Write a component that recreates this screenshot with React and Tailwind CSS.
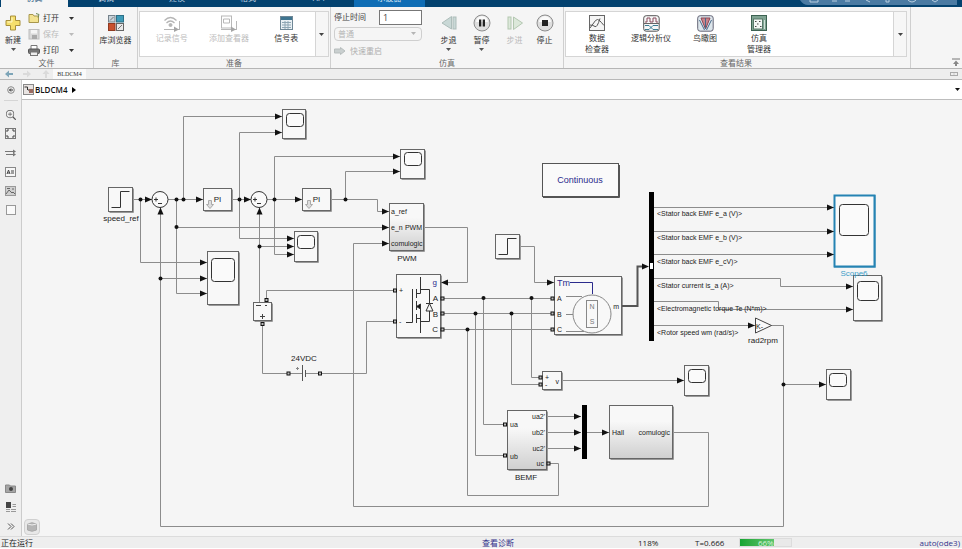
import { BsZoomIn } from "react-icons/bs";

/* ---------- ribbon ---------- */

const Caret = ({ className = "" }) => (
  <svg className={className} width="5" height="3" viewBox="0 0 5 3">
    <path d="M0 0h5L2.5 3z" fill="currentColor" />
  </svg>
);

const Section = ({ label, className, children }) => (
  <section
    className={`flex flex-col border-r border-[#cfcfcf] text-[#444] ${className}`}
  >
    <div className="flex h-[50px]">{children}</div>
    <h2 className="pt-px text-center text-[8px] leading-[10px] text-[#666]">
      {label}
    </h2>
  </section>
);

const BigButton = ({ icon, label, caret, disabled, className = "" }) => (
  <button
    type="button"
    disabled={disabled}
    className={`flex flex-col items-center pt-[7px] text-[8px] leading-[11px] text-[#333] disabled:text-[#b9b9b9] ${className}`}
  >
    <span className="flex h-[18px] items-center">{icon}</span>
    <span className="mt-[2px] h-3 whitespace-nowrap">{label}</span>
    {caret && <Caret className="mt-[2px] text-[#555]" />}
  </button>
);

const GalleryButton = ({ icon, label, disabled, className = "" }) => (
  <button
    type="button"
    disabled={disabled}
    className={`flex flex-col items-center pt-[2px] text-[8px] leading-[11px] whitespace-pre text-[#333] disabled:text-[#bcbcbc] ${className}`}
  >
    <span className="flex h-[18px] items-center">{icon}</span>
    {label}
  </button>
);

const FileButton = ({ icon, label, disabled }) => (
  <button
    type="button"
    disabled={disabled}
    className="flex h-4 items-center text-[8px] leading-4 text-[#333] disabled:text-[#bbb]"
  >
    <span className="flex w-[15px]">{icon}</span>
    {label}
    <Caret className="ml-[10px]" />
  </button>
);

const GalleryMore = () => (
  <button
    type="button"
    aria-label="更多"
    className="flex w-[13px] shrink-0 items-center justify-center border-l border-[#d5d5d5] bg-[#f6f6f6]"
  >
    <Caret />
  </button>
);

const PlusIcon = () => (
  <svg width="16" height="16" viewBox="0 0 16 16">
    <path
      d="M5.5 1h5v4.5H15v5h-4.500V15h-5v-4.500H1v-5h4.500z"
      fill="#f6df6b"
      stroke="#a8903c"
    />
    <path d="M7 2.5V7H2.500" fill="none" stroke="#fff8d0" />
  </svg>
);

const FolderIcon = () => (
  <svg width="12" height="11" viewBox="0 0 12 11">
    <path d="M1 1.5h4L6 3h4.500v6.500H1z" fill="#f3e391" stroke="#a8974d" />
    <path d="M8 0.5l3 1-1 3" fill="none" stroke="#6d8a55" />
  </svg>
);

const SaveIcon = () => (
  <svg width="12" height="11" viewBox="0 0 12 11">
    <rect x="1" y="0.5" width="10" height="9.5" fill="#d9d9d9" stroke="#bdbdbd" />
    <rect x="3" y="1" width="6" height="3.5" fill="#f5f5f5" />
    <rect x="4" y="6" width="5" height="4" fill="#aaa" />
  </svg>
);

const PrintIcon = () => (
  <svg width="12" height="11" viewBox="0 0 12 11">
    <path d="M3 4V0.5h6V4" fill="#fff" stroke="#777" />
    <rect x="0.5" y="4" width="11" height="4.5" rx="1" fill="#777" stroke="#555" />
    <rect x="2.5" y="7" width="7" height="3.5" fill="#eee" stroke="#777" />
  </svg>
);

const LibraryIcon = () => (
  <svg width="16" height="16" viewBox="0 0 16 16">
    <rect x="0.5" y="0.5" width="6.5" height="6.5" fill="#c8d3da" stroke="#75828b" />
    <rect x="8.5" y="0.5" width="7" height="6.5" fill="#3f9bb8" stroke="#2c7087" />
    <rect x="0.5" y="8.5" width="6.5" height="7" fill="#c9512e" stroke="#8f3b22" />
    <rect x="8.5" y="8.5" width="7" height="7" fill="#e9e9e9" stroke="#666" />
    <path d="M10 14l4-4M2 5.5L5.500 2" stroke="#777" />
  </svg>
);

const LogSignalIcon = () => (
  <svg width="18" height="17" viewBox="0 0 18 17" fill="none" stroke="#b5b5b5">
    <path d="M1.5 5.5q6-6 12 0M3.500 8q4-4 8 0" strokeWidth="1.3" />
    <circle cx="7.5" cy="10" r="1.5" fill="#b5b5b5" />
    <path d="M1 14.5h16M16.500 6v9" />
    <path d="M11 11.5l5 3-5 2.500z" fill="#a5a5a5" stroke="none" />
  </svg>
);

const AddViewerIcon = () => (
  <svg width="18" height="17" viewBox="0 0 18 17" fill="none" stroke="#b8b8b8">
    <rect x="1.5" y="1" width="10" height="12" />
    <path d="M3.5 4h6v4h-6zM1 14.500h16M16.500 6v9" />
    <path d="M11 11.5l5 3-5 2.500z" fill="#a5a5a5" stroke="none" />
  </svg>
);

const TableIcon = () => (
  <svg width="13" height="14" viewBox="0 0 13 14">
    <rect x="0.5" y="0.5" width="12" height="13" fill="#e9f0f4" stroke="#6f8796" />
    <rect x="1" y="1" width="11" height="3" fill="#3f7590" />
    <path d="M2 6.5h9M2 9h9M2 11.500h9M5 5v8M8 5v8" stroke="#8ea6b4" />
  </svg>
);

const StepIcon = ({ back }) => (
  <svg width="16" height="16" viewBox="0 0 16 16">
    {back ? (
      <g fill="#c9d8d6" stroke="#adbdba">
        <path d="M10.5 1.5V14L1 8z" />
        <rect x="12" y="2" width="3" height="12" />
      </g>
    ) : (
      <g fill="#dce8da" stroke="#b3c7b0">
        <path d="M6.5 2v12.500l9-6.500z" />
        <rect x="1" y="2" width="3" height="12" />
      </g>
    )}
  </svg>
);

const RoundIcon = ({ pause }) => (
  <svg width="18" height="18" viewBox="0 0 18 18">
    <circle cx="9" cy="9" r="8" fill="#dedede" stroke="#8d8d8d" />
    <path d="M3 8a6 6 0 0 1 12 0z" fill="#fafafa" />
    {pause ? (
      <path d="M6 5.5h2.300v7H6zM9.700 5.500H12v7H9.700z" fill="#222" />
    ) : (
      <rect x="6" y="6" width="6" height="6" fill="#222" />
    )}
  </svg>
);

const InspectorIcon = () => (
  <svg width="16" height="16" viewBox="0 0 16 16" fill="none">
    <rect x="0.5" y="0.5" width="15" height="15" fill="#f5f5f5" stroke="#666" />
    <path d="M1 13L6.500 5.500q2-2 4 0t4.500 5M1 10q3 0 5 1.500T11 3.500" stroke="#555" />
  </svg>
);

const LogicIcon = () => (
  <svg width="17" height="17" viewBox="0 0 17 17" fill="none">
    <rect x="0.7" y="0.7" width="15.5" height="15.5" rx="2.5" fill="#f7f7f7" stroke="#555" />
    <path d="M2 7h2V3h3v4h3V3h3v4h2" stroke="#884a5c" />
    <path d="M1 8.5h15" stroke="#666" />
    <path d="M2 10.5h4l4 4h5M2 14.500h4l4-4h5" stroke="#3b7d93" />
  </svg>
);

const BirdIcon = () => (
  <svg width="17" height="17" viewBox="0 0 17 17" fill="none">
    <rect x="0.7" y="0.7" width="15.5" height="15.5" rx="2.5" fill="#dce5eb" stroke="#667" />
    <path d="M4 3l4.500 11L13 3z" fill="#c9848c" stroke="#8d4450" />
    <path d="M8.500 14V3M2.500 5l5 10M14.500 5l-5 10" stroke="#46698a" />
  </svg>
);

const ManagerIcon = () => (
  <svg width="16" height="16" viewBox="0 0 16 16" fill="none">
    <rect x="0.5" y="0.5" width="15" height="15" fill="#7fa392" stroke="#3c6151" />
    <rect x="2.5" y="4" width="9" height="10" fill="#f4f8f6" stroke="#587969" />
    <path d="M4 6.5h1.500M8 6.500h1.500M6 9h1.500M4 11.500h1.500M9 11.500h1.500" stroke="#444" />
    <path d="M13.5 5v9" stroke="#cfe2d8" />
  </svg>
);

const TABS = [
  { name: "仿真", cls: "w-[67px] bg-[#f5f5f5] text-[#1a4f78]" },
  { name: "调试", cls: "w-[76px] text-[#c5d8e6]" },
  { name: "建模", cls: "w-[66px] text-[#c5d8e6]" },
  { name: "格式", cls: "w-[76px] text-[#c5d8e6]" },
  { name: "APP", cls: "w-[68px] text-[#c5d8e6]" },
  { name: "示波器", cls: "w-[71px] bg-[#0f6db5] text-[#d5e8f6]" },
];

const TabStrip = () => (
  <nav className="flex h-[7px] overflow-hidden bg-[#03426f] pl-px">
    {TABS.map((tab) => (
      <button
        key={tab.name}
        type="button"
        className={`flex h-[7px] items-end justify-center pb-[5px] text-[8px] leading-[8px] ${tab.cls}`}
      >
        {tab.name}
      </button>
    ))}
    <svg className="mr-[5px] ml-auto" width="157" height="5" viewBox="0 0 157 5">
      <path d="M0 0h157v5H8Q3 5 0 0z" fill="#4b7ba3" />
      <g fill="none" stroke="#b9cfe0">
        <path d="M10 0v2h8V0M32 1h5M45 1h5M66 0l4 2M86 0v2h3V0M132 0l3 2 3-2" />
        <path d="M108 0q4 4 8 0" />
      </g>
    </svg>
  </nav>
);

const Ribbon = () => (
  <header className="flex h-[62px] border-b border-[#b5b5b5] bg-[#f5f5f5]">
    <Section label="文件" className="w-[94px]">
      <BigButton icon={<PlusIcon />} label="新建" caret className="w-[26px]" />
      <div className="flex flex-col pt-[3px] pl-[2px]">
        <FileButton icon={<FolderIcon />} label="打开" />
        <FileButton icon={<SaveIcon />} label="保存" disabled />
        <FileButton icon={<PrintIcon />} label="打印" />
      </div>
    </Section>
    <Section label="库" className="w-11">
      <BigButton icon={<LibraryIcon />} label="库浏览器" className="w-full" />
    </Section>
    <Section label="准备" className="w-[193px] px-px">
      <div className="mt-1 flex h-[46px] w-full border border-[#d5d5d5] bg-white pl-[3px]">
        <GalleryButton icon={<LogSignalIcon />} label="记录信号" disabled className="flex-1" />
        <GalleryButton icon={<AddViewerIcon />} label="添加查看器" disabled className="flex-1" />
        <GalleryButton icon={<TableIcon />} label="信号表" className="flex-1" />
        <GalleryMore />
      </div>
    </Section>
    <Section label="仿真" className="w-[233px]">
      <div className="flex w-[91px] flex-col gap-[3px] pt-[3px] pl-[3px] text-[8px]">
        <div className="flex h-[14px] items-center justify-between leading-[14px]">
          <label htmlFor="stop-time" className="whitespace-nowrap">
            停止时间
          </label>
          <input
            id="stop-time"
            defaultValue="1"
            className="h-[15px] w-[43px] border border-[#777] bg-white px-[3px] text-[9px]"
          />
        </div>
        <div className="relative flex h-[14px]">
          <select
            aria-label="仿真模式"
            disabled
            className="w-full appearance-none rounded-sm border border-[#cfcfcf] px-[3px] text-[#b5b5b5]"
          >
            <option>普通</option>
          </select>
          <Caret className="absolute top-[5px] right-[6px] text-[#b5b5b5]" />
        </div>
        <button type="button" disabled className="flex h-[14px] items-center gap-1 text-[#b0b0b0]">
          <svg width="12" height="8" viewBox="0 0 12 8">
            <path d="M0.5 2h6V0.500L11 4 6.500 7.500V6h-6z" fill="#c9cfcf" stroke="#b7bdbd" />
          </svg>
          快速重启
        </button>
      </div>
      <div className="flex pl-[10px]">
        <BigButton icon={<StepIcon back />} label="步退" caret className="w-[33px]" />
        <BigButton icon={<RoundIcon pause />} label="暂停" caret className="w-[33px]" />
        <BigButton icon={<StepIcon />} label="步进" disabled className="w-[33px]" />
        <BigButton icon={<RoundIcon />} label="停止" className="w-[27px]" />
      </div>
    </Section>
    <Section label="查看结果" className="flex-1 pr-[3px] pl-px">
      <div className="mt-1 flex h-[46px] w-full border border-[#d5d5d5] bg-white pl-1">
        <GalleryButton icon={<InspectorIcon />} label={"数据\n检查器"} className="w-[54px]" />
        <GalleryButton icon={<LogicIcon />} label="逻辑分析仪" className="w-[54px]" />
        <GalleryButton icon={<BirdIcon />} label="鸟瞰图" className="w-[54px]" />
        <GalleryButton icon={<ManagerIcon />} label={"仿真\n管理器"} className="w-[54px]" />
        <div className="flex-1" />
        <GalleryMore />
      </div>
    </Section>
    <div className="flex w-[51px] items-end justify-end pr-[2px] pb-[2px]">
      <button type="button" aria-label="折叠工具条">
        <svg width="8" height="8" viewBox="0 0 8 8" className="block">
          <path d="M0 1h8" stroke="#777" />
          <path d="M1 6l3-3.500L7 6zM3 6h2v2H3z" fill="#888" />
        </svg>
      </button>
    </div>
  </header>
);

const DocumentTabs = () => (
  <div className="flex h-[11px] items-center border-b border-[#b8b8b8] bg-[#eeeeee] pl-[5px]">
    <svg width="48" height="8" viewBox="0 0 48 8">
      <path d="M0 4l4-3.500V3h4v2H4v2.500z" fill="#7da5b8" />
      <path d="M26 4l-4-3.500V3h-4v2h4v2.500z" fill="#dadada" />
      <path d="M41 0l3.500 4H42v4h-2V4h-2.500z" fill="#dadada" />
    </svg>
    <button
      type="button"
      className="h-[10px] w-[33px] bg-[#fafafa] font-['Liberation_Serif',serif] text-[6px] leading-[10px] text-[#333]"
    >
      BLDCM4
    </button>
    <svg className="mr-1 ml-auto" width="8" height="4" viewBox="0 0 8 4">
      <path d="M0 0.500h8M0 3.500h8M0.500 0v4M7.500 0v4M4 1.500v1" stroke="#aaa" />
    </svg>
  </div>
);

/* ---------- left palette ---------- */

const SideIcon = ({ label, children }) => (
  <button
    type="button"
    aria-label={label}
    className="flex h-[11px] w-[11px] items-center justify-center text-[#555]"
  >
    {children}
  </button>
);

const Palette = () => (
  <aside className="flex w-[22px] shrink-0 flex-col items-center justify-between border-r border-[#cccccc] bg-[#efefef] pb-1">
    <div className="flex flex-col items-center gap-2">
      <div className="flex h-[21px] w-[14px] items-center justify-center border-b border-[#d5d5d5]">
        <SideIcon label="隐藏浏览器">
          <svg width="8" height="8" viewBox="0 0 8 8" fill="none" stroke="#888">
            <circle cx="4" cy="4" r="3.3" />
            <path d="M6 4H2.500M4 2.500L2.500 4 4 5.500" stroke="#333" />
          </svg>
        </SideIcon>
      </div>
      <SideIcon label="缩放">
        <BsZoomIn size={10} />
      </SideIcon>
      <SideIcon label="适应窗口">
        <svg width="11" height="11" viewBox="0 0 11 11" fill="none" stroke="#777">
          <rect x="0.5" y="0.5" width="10" height="10" />
          <path d="M2 4V2h2M7 2h2v2M9 7v2H7M4 9H2V7" stroke="#444" />
        </svg>
      </SideIcon>
      <SideIcon label="采样时间">
        <svg width="11" height="8" viewBox="0 0 11 8" fill="none" stroke="#777">
          <path d="M0 2.5h9M1 5.500h8" />
          <path d="M8 0.500l3 2-3 2zM8 3.500l3 2-3 2z" fill="#777" stroke="none" />
        </svg>
      </SideIcon>
      <SideIcon label="注释">
        <svg width="11" height="10" viewBox="0 0 11 10" fill="none" stroke="#888">
          <rect x="0.5" y="0.5" width="10" height="9" fill="#f7f7f7" />
          <path d="M2 7l1.500-4L5 7M2.500 6h2M6 4h3M6 6h3" stroke="#444" />
        </svg>
      </SideIcon>
      <SideIcon label="图像">
        <svg width="11" height="10" viewBox="0 0 11 10" fill="none" stroke="#999">
          <rect x="0.5" y="0.5" width="10" height="9" fill="#cfcfcf" />
          <path d="M1 8l3-4 3 3 1-1 2 2M2 2.500h3M7 3h2" stroke="#666" />
        </svg>
      </SideIcon>
      <SideIcon label="区域">
        <svg width="10" height="10" viewBox="0 0 10 10">
          <rect x="0.5" y="0.5" width="9" height="9" fill="#fafafa" stroke="#999" />
        </svg>
      </SideIcon>
    </div>
    <div className="flex flex-col gap-2">
      <SideIcon label="截图">
        <svg width="11" height="9" viewBox="0 0 11 9">
          <path d="M0.5 1h4l1 1h5v6.500h-10z" fill="#a5a5a5" stroke="#888" />
          <circle cx="6" cy="5" r="2" fill="#444" />
        </svg>
      </SideIcon>
      <SideIcon label="模型浏览器">
        <svg width="11" height="11" viewBox="0 0 11 11">
          <path d="M1 0h5v6H1z" fill="#444" />
          <path d="M7.5 2.500H11M7.500 4.500H11M1 7.500h4M1 9.500h4M6 7.500h5M6 9.500h5" stroke="#999" />
        </svg>
      </SideIcon>
      <SideIcon label="更多">
        <svg width="8" height="7" viewBox="0 0 8 7" fill="none" stroke="#555">
          <path d="M1 0.500l3 3-3 3M4 0.500l3 3-3 3" />
        </svg>
      </SideIcon>
    </div>
  </aside>
);

const Breadcrumb = () => (
  <div className="flex h-5 items-center border-b border-[#bdbdbd] bg-white pr-[2px] pl-px text-[8px] text-[#111]">
    <svg width="11" height="11" viewBox="0 0 11 11">
      <rect x="0.5" y="0.5" width="10" height="10" fill="#e9e4e2" stroke="#888" />
      <path d="M1.5 3h3v3M5 6h2" fill="none" stroke="#333" />
      <rect x="6" y="5" width="4" height="4" fill="#9b6a60" />
    </svg>
    <a href="#model" className="ml-px font-['Open_Sans',sans-serif] font-semibold">
      BLDCM4
    </a>
    <svg className="ml-1" width="4" height="6" viewBox="0 0 4 6">
      <path d="M0 0l4 3-4 3z" />
    </svg>
    <button type="button" aria-label="历史" className="ml-auto">
      <Caret />
    </button>
  </div>
);

/* ---------- block diagram ---------- */

const ARROWS = {
  right: "l-7 -3v6z",
  left: "l7 -3v6z",
  up: "l-3 7h6z",
};

const Arrow = ({ x, y, dir = "right" }) => (
  <path d={`M${x} ${y}${ARROWS[dir]}`} fill="#111" />
);

const Port = ({ x, y }) => (
  <rect x={x - 1.5} y={y - 1.5} width="3" height="3" fill="#bbb" stroke="#111" />
);

const Label = ({ x, y, size = 7, anchor = "start", fill = "#222", children }) => (
  <text
    x={x}
    y={y}
    fontSize={size}
    textAnchor={anchor}
    dominantBaseline="central"
    fill={fill}
  >
    {children}
  </text>
);

const Box = ({ x, y, w, h, fill = "#f8f8f8", stroke = "#666" }) => (
  <g>
    <path d={`M${x + 1} ${y + h + 1}h${w}v${-h}`} fill="none" stroke="#999" />
    <rect x={x} y={y} width={w} height={h} fill={fill} stroke={stroke} />
  </g>
);

const Scope = ({ x, y, w, h, screen, stroke }) => (
  <g>
    <Box x={x} y={y} w={w} h={h} stroke={stroke} />
    <rect
      x={screen[0]}
      y={screen[1]}
      width={screen[2]}
      height={screen[3]}
      rx="3"
      fill="#fafafa"
      stroke="#333"
    />
  </g>
);

const Step = ({ x, y }) => (
  <g>
    <Box x={x} y={y} w={24} h={24} />
    <path d={`M${x + 3} ${y + 20}h9v-16h9`} fill="none" stroke="#333" />
  </g>
);

const Sum = ({ x, y }) => (
  <g>
    <circle cx={x} cy={y} r="8" fill="#fafafa" stroke="#333" />
    <path
      d={`M${x - 6} ${y}h4M${x - 4} ${y - 2}v4M${x - 2} ${y + 4}h4`}
      stroke="#333"
    />
  </g>
);

const PI = ({ x, y }) => (
  <g>
    <Box x={x} y={y} w={28} h={22} />
    <path
      d={`M${x + 5} ${y + 12}h3v4h2l-3.5 4-3.5-4h2z`}
      fill="#ddd"
      stroke="#aaa"
    />
    <Label x={x + 14} y={y + 11} size={8} anchor="middle">
      PI
    </Label>
  </g>
);

const WIRES = [
  "M133 199.5H160M140.5 199.5V262.5H207",
  "M160.5 207V526.5H783.5V325.5H771M160.5 278.5H207",
  "M168 199.5H203M176.5 199.5V293.5H207M176.5 227.5H389",
  "M183.5 199.5V116.5H282",
  "M231 199.5H251M239.5 132.5V238.5H294M239.5 132.5H282",
  "M267 199.5H302M274.5 156.5V254.5H294M274.5 156.5H400",
  "M259.5 207V302M259.5 246.5H294",
  "M330 199.5H377.5V211.5H389M345.5 199.5V171.5H400",
  "M424 227.5H467.5V282.5H441",
  "M266.5 300V290.5H395M262.5 324V373.5H302M306 373.5H366.5V321.5H395",
  "M441 298.5H554M441 313.5H554M441 329.5H554",
  "M483.5 298.5V424.5H505M475.5 313.5V455.5H505",
  "M467.5 329.5V495.5H558.5V463.5H548",
  "M531.5 298.5V377.5H541M511.5 313.5V384.5H541M562 380.5H684",
  "M519 246.5H534.5V282.5H554",
  "M547 416.5H581M547 432.5H581M547 448.5H581M587 432.5H609",
  "M673 432.5H708.5V506.5H353.5V243.5H389",
  "M653 207.5H834M653 231.5H834M653 254.5H834",
  "M653 278.5H780.5V286.5H853M653 301.5H718.5V309.5H853M653 325.5H755",
  "M783 384.5H826",
];

const DOTS = [
  [140.5, 199.5], [176.5, 199.5], [183.5, 199.5], [239.5, 199.5], [274.5, 199.5],
  [345.5, 199.5], [176.5, 227], [259.5, 246.5], [160.5, 278.5], [483.5, 298],
  [531.5, 298], [475.5, 313.5], [511.5, 313.5], [467.5, 329.5], [783.5, 384.5],
];

const RIGHT_ARROWS = [
  [152, 199.5], [203, 199.5], [251, 199.5], [302, 199.5], [282, 116.5], [282, 132.5],
  [400, 156.5], [400, 171.5], [207, 262.5], [207, 278.5], [207, 293.5], [294, 238.5],
  [294, 246.5], [294, 254.5], [389, 211.5], [389, 227.5], [389, 243.5], [554, 282.5],
  [649, 266.5], [581, 416.5], [581, 432.5], [581, 448.5], [609, 432.5], [684, 380.5],
  [834, 207.5], [834, 231.5], [834, 254.5], [853, 286.5], [853, 309.5], [755, 325.5],
  [826, 384.5],
];

const PORTS = [
  [266.5, 300], [262.5, 324], [288.5, 373.5], [320, 373.5], [395, 290.5], [395, 321.5],
  [442.5, 298.5], [442.5, 313.5], [442.5, 329.5], [552.5, 298.5], [552.5, 313.5],
  [552.5, 329.5], [540.5, 377.5], [540.5, 384.5], [505, 424.5], [505, 455.5], [548.5, 463.5],
];

const SIGNALS = [
  ["<Stator back EMF e_a (V)>", 213],
  ["<Stator back EMF e_b (V)>", 237],
  ["<Stator back EMF e_cV)>", 261],
  ["<Stator current is_a (A)>", 285],
  ["<Electromagnetic torque Te (N*m)>", 308],
  ["<Rotor speed wm (rad/s)>", 332],
];

const Inverter = () => (
  <g>
    <Box x={396.5} y={274.5} w={44} h={63} />
    <g fill="none" stroke="#333">
      <path d="M406 322.5h6.500V289M416.500 289v9M416.500 301v9M416.500 314v9" />
      <path d="M416 293.5h4.500V277M416 306.500h4.500V333M416 318.500h4.500M420.500 289.500h9v32h-9" />
      <path d="M426 303.5h7M429.500 303.500l3.500 7.500h-7z" fill="#f8f8f8" />
      <path d="M416.5 306.500l4-2.500v5z" fill="#111" />
    </g>
    <Label x={399} y={290}>+</Label>
    <Label x={399} y={321}>-</Label>
    <Label x={437} y={282} size={8} anchor="end" fill="#2b2b8c">g</Label>
    <Label x={438} y={298} size={8} anchor="end">A</Label>
    <Label x={438} y={314} size={8} anchor="end">B</Label>
    <Label x={438} y={329} size={8} anchor="end">C</Label>
  </g>
);

const Motor = () => (
  <g>
    <Box x={554.5} y={276.5} w={67} h={58} />
    <path d="M570 282.5h22.500V294" fill="none" stroke="#2b2b8c" />
    <g fill="none" stroke="#888">
      <path d="M566 296.5h16M566 314.500h7M566 331.500h18" />
      <circle cx="592" cy="314" r="19" />
      <rect x="586.5" y="300.5" width="11" height="27" />
    </g>
    <Label x={557} y={283} size={9} fill="#2b2b8c">Tm</Label>
    <Label x={557} y={298}>A</Label>
    <Label x={557} y={314}>B</Label>
    <Label x={557} y={329}>C</Label>
    <Label x={592} y={306} anchor="middle" fill="#777">N</Label>
    <Label x={592} y={321} anchor="middle" fill="#777">S</Label>
    <Label x={619} y={306} anchor="end">m</Label>
    <path d="M622 306H637.5V266.500H645" fill="none" stroke="#555" strokeWidth="2" />
  </g>
);

const Diagram = () => (
  <svg
    width="940"
    height="436"
    viewBox="22 100 940 436"
    className="block font-['Liberation_Sans',sans-serif]"
    role="img"
    aria-label="BLDCM4"
  >
    <defs>
      <linearGradient id="subsystem" x1="0" y1="0" x2="0" y2="1">
        <stop offset="0.3" stopColor="#f8f8f8" />
        <stop offset="1" stopColor="#cfcfcf" />
      </linearGradient>
    </defs>

    {WIRES.map((d) => (
      <path key={d} d={d} fill="none" stroke="#8c8c8c" />
    ))}

    <Step x={108.5} y={187.5} />
    <Label x={121} y={218} size={8} anchor="middle">speed_ref</Label>
    <Sum x={160} y={199.5} />
    <Sum x={259} y={199.5} />
    <PI x={203.5} y={188.5} />
    <PI x={302.5} y={188.5} />

    <Scope x={282.5} y={109.5} w={23} h={29} screen={[286.5, 113.5, 17, 13]} />
    <Scope x={400.5} y={149.5} w={24} h={29} screen={[404.5, 152.5, 17, 13]} />
    <Scope x={294.5} y={231.5} w={23} h={30} screen={[297.5, 235.5, 17, 13]} />
    <Scope x={207.5} y={251.5} w={31} h={53} screen={[211.5, 258.5, 23, 23]} />
    <Scope x={684.5} y={365.5} w={24} h={30} screen={[688.5, 369.5, 17, 13]} />
    <Scope x={826.5} y={369.5} w={24} h={30} screen={[829.5, 373.5, 17, 13]} />
    <Scope x={853.5} y={275.5} w={28} h={45} screen={[857.5, 281.5, 21, 19]} />
    <path d="M834 267.5h41.500V195" fill="none" stroke="#8fbdd3" />
    <rect x="834.5" y="195.5" width="40" height="71" fill="#fafafa" stroke="#2583b3" strokeWidth="2" />
    <rect x="839.5" y="204.5" width="29" height="31" rx="3" fill="#fafafa" stroke="#333" />
    <Label x={854} y={273} size={8} anchor="middle" fill="#3a9cc8">Scope6</Label>

    {/* voltage sensor and dc source */}
    <Box x={253.5} y={302.5} w={18} h={18} />
    <path d="M256 305.5h5M265 305.500h2M260 316.500h5M262.500 314v5" stroke="#444" />
    <path d="M302.5 365v16M305.500 370v7" stroke="#555" />
    <path d="M296 368.5h3M297.500 367v3" stroke="#888" />
    <Label x={304} y={358} size={8} anchor="middle">24VDC</Label>

    <Box x={389.5} y={203.5} w={34} h={47} fill="url(#subsystem)" />
    <Label x={391} y={211}>a_ref</Label>
    <Label x={391} y={227}>e_n</Label>
    <Label x={422} y={227} anchor="end">PWM</Label>
    <Label x={391} y={243}>comulogic</Label>
    <Label x={407} y={258} size={8} anchor="middle">PWM</Label>

    <Inverter />

    <g>
      <path d="M543 197.5h76.500V165" fill="none" stroke="#555" />
      <rect x="542.5" y="163.5" width="76" height="33" fill="#fafafa" stroke="#555" />
      <Label x={580} y={180} size={9} anchor="middle" fill="#2b2b8c">Continuous</Label>
    </g>

    <Step x={495.5} y={234.5} />
    <Motor />

    <Box x={542.5} y={371.5} w={19} h={18} />
    <Label x={545} y={377}>+</Label>
    <Label x={545} y={384}>-</Label>
    <Label x={559} y={381} anchor="end">v</Label>

    <Box x={507.5} y={410.5} w={39} h={59} fill="url(#subsystem)" />
    <Label x={510} y={424}>ua</Label>
    <Label x={510} y={456}>ub</Label>
    <Label x={545} y={416} anchor="end">ua2'</Label>
    <Label x={545} y={432} anchor="end">ub2'</Label>
    <Label x={545} y={448} anchor="end">uc2'</Label>
    <Label x={544} y={463} anchor="end">uc</Label>
    <Label x={526} y={477} size={8} anchor="middle">BEMF</Label>

    <rect x="582" y="405" width="5" height="54" fill="#000" />
    <Box x={609.5} y={405.5} w={63} h={53} fill="url(#subsystem)" />
    <Label x={612} y={432}>Hall</Label>
    <Label x={670} y={432} anchor="end">comulogic</Label>

    {/* bus selector */}
    <rect x="649" y="192" width="5" height="149" fill="#000" />
    <rect x="650" y="263" width="3" height="6" fill="#fff" />
    {SIGNALS.map(([name, y]) => (
      <Label key={name} x={657} y={y}>
        {name}
      </Label>
    ))}
    <path d="M755.5 318v15l16-7.500z" fill="#fafafa" stroke="#444" />
    <Label x={756} y={326}>K-</Label>
    <Label x={763} y={340} size={8} anchor="middle">rad2rpm</Label>

    {PORTS.map(([x, y]) => (
      <Port key={`${x}-${y}`} x={x} y={y} />
    ))}
    {DOTS.map(([x, y]) => (
      <circle key={`${x}-${y}`} cx={x} cy={y} r="2" fill="#111" />
    ))}
    {RIGHT_ARROWS.map(([x, y]) => (
      <Arrow key={`${x}-${y}`} x={x} y={y} />
    ))}
    <Arrow x={441} y={282.5} dir="left" />
    <Arrow x={160.5} y={207.5} dir="up" />
    <Arrow x={259.5} y={207.5} dir="up" />
  </svg>
);

const StatusBar = () => (
  <footer className="grid h-[11px] grid-cols-[482fr_156fr_57fr_44fr_223fr] items-center bg-[#eeeeee] text-[8px] leading-[11px] whitespace-nowrap text-[#222]">
    <span className="pl-px">正在运行</span>
    <a href="#diagnostics" className="text-[#33338c]">
      查看诊断
    </a>
    <span>118%</span>
    <span>T=0.666</span>
    <div className="flex items-center justify-between pr-[2px]">
      <div className="h-[9px] w-[53px] border border-[#dcdcdc] bg-[#e9e9e9]">
        <div
          className="h-full bg-linear-to-r from-[#14a532] to-[#5cc46c] text-right text-[8px] leading-[8px] text-[#d5f2d8]"
          style={{ width: "66%" }}
        >
          66%
        </div>
      </div>
      <a href="#solver" className="text-[#33338c]">
        auto(ode3)
      </a>
    </div>
  </footer>
);

export default function App() {
  return (
    <div className="flex min-h-screen flex-col bg-white font-['Open_Sans','Noto_Sans_CJK_SC',sans-serif]">
      <TabStrip />
      <Ribbon />
      <DocumentTabs />
      <div className="flex flex-1 border-b border-[#dcdcdc]">
        <Palette />
        <main className="flex min-w-0 flex-1 flex-col bg-[#f5f5f5]">
          <Breadcrumb />
          <div className="relative flex-1 overflow-hidden">
            <Diagram />
            <button
              type="button"
              aria-label="模型数据"
              className="absolute bottom-px left-[2px] flex h-4 w-4 items-center justify-center rounded-sm border border-[#d0d0d0] bg-[#e8e8e8]"
            >
              <svg width="10" height="10" viewBox="0 0 10 10">
                <path d="M0.5 2q4.500-2.500 9 0v6q-4.500 2.500-9 0z" fill="#b5b5b5" stroke="#aaa" />
                <path d="M0.5 2q4.500 2 9 0" fill="none" stroke="#eee" />
              </svg>
            </button>
          </div>
        </main>
      </div>
      <StatusBar />
      <div className="h-[2px] bg-white" />
    </div>
  );
}
